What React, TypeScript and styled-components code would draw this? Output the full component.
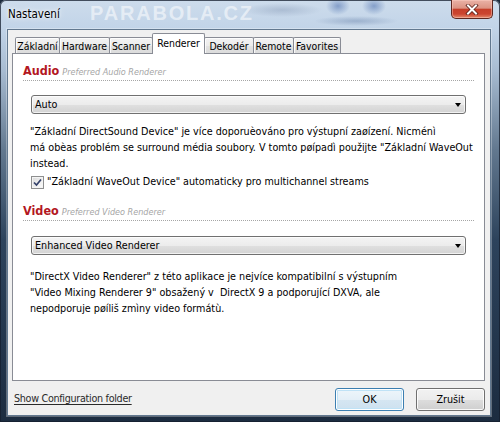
import React from "react";
import styled, { createGlobalStyle } from "styled-components";

const FONT = `"DejaVu Sans Condensed", "DejaVu Sans", Tahoma, sans-serif`;

const Global = createGlobalStyle`
  html, body { margin: 0; padding: 0; background: #1b2a3c; }
  body { width: 500px; height: 422px; overflow: hidden; }
  * { box-sizing: border-box; }
`;

const Frame = styled.div`
  position: relative;
  width: 500px;
  height: 422px;
  display: flex;
  flex-direction: column;
  font-family: ${FONT};
  font-stretch: condensed;
  font-size: 10.7px;
  color: #000;
  border-radius: 6px 6px 0 0;
  overflow: hidden;
  box-shadow: inset 0 0 0 1px rgba(20, 30, 45, 0.75);
  background:
    radial-gradient(ellipse 40px 7px at 282px 10px, rgba(95, 115, 150, 0.28), transparent),
    radial-gradient(ellipse 12px 9px at 338px 6px, rgba(45, 85, 160, 0.45), transparent),
    radial-gradient(ellipse 12px 9px at 374px 6px, rgba(45, 85, 160, 0.45), transparent),
    radial-gradient(ellipse 42px 5px at 356px 21px, rgba(60, 90, 140, 0.3), transparent),
    linear-gradient(to bottom, #cddcec 0px, #c2d4e8 28px, #a8bcd2 70px, #62788f 150px, #2d435c 240px, #1c2c40 100%);
`;

const TitleBar = styled.div`
  position: relative;
  height: 30px;
  flex: none;
  display: flex;
  align-items: flex-start;
  padding: 0 7px 0 8px;
`;

const Title = styled.div`
  margin-top: 7px;
  line-height: 14px;
  font-size: 11.5px;
  color: #000;
  text-shadow: 0 0 6px rgba(255, 255, 255, 0.95), 0 0 3px rgba(255, 255, 255, 0.9);
`;

const Watermark = styled.div`
  position: absolute;
  left: 90px;
  top: 3px;
  font-family: "Liberation Sans", Arial, sans-serif;
  font-weight: bold;
  font-size: 20px;
  line-height: 20px;
  letter-spacing: 1.8px;
  color: rgba(255, 255, 255, 0.55);
  pointer-events: none;
`;

const CloseButton = styled.div`
  margin-left: auto;
  width: 42px;
  height: 19px;
  display: flex;
  align-items: center;
  justify-content: center;
  border: 1px solid #5e2720;
  border-top: none;
  border-radius: 0 0 5px 5px;
  background: linear-gradient(to bottom, #eab2a6 0%, #dc9383 45%, #c63f2a 52%, #cc4530 78%, #e48a6c 100%);
  box-shadow: inset 0 0 0 1px rgba(255, 210, 200, 0.45);
`;

const Client = styled.div`
  flex: 1;
  margin: 0 10px 7px 8px;
  background: #f0f0f0;
  display: flex;
  flex-direction: column;
  box-shadow: 0 0 0 1px #62788f, 0 0 0 2px rgba(255, 255, 255, 0.3);
`;

const TabStrip = styled.div`
  display: flex;
  align-items: flex-end;
  height: 20px;
  margin: 3px 0 0 7px;
  position: relative;
  z-index: 1;
`;

const Tab = styled.div<{ $w: number; $active?: boolean }>`
  width: ${(p) => p.$w}px;
  height: ${(p) => (p.$active ? 21 : 16)}px;
  margin-right: -1px;
  margin-bottom: ${(p) => (p.$active ? -1 : 0)}px;
  border: 1px solid #898c95;
  border-bottom: none;
  border-radius: 2px 2px 0 0;
  position: relative;
  z-index: ${(p) => (p.$active ? 2 : 1)};
  text-align: center;
  white-space: nowrap;
  font-size: 10.4px;
  line-height: 14px;
  padding-top: ${(p) => (p.$active ? 2 : 1)}px;
  background: ${(p) =>
    p.$active
      ? "#ffffff"
      : "linear-gradient(to bottom, #f3f3f3 0%, #ececec 50%, #e2e2e2 51%, #dcdcdc 100%)"};
  box-shadow: ${(p) => (p.$active ? "none" : "inset 1px 1px 0 rgba(255,255,255,0.8)")};
`;

const Panel = styled.div`
  flex: none;
  height: 328px;
  margin: 0 5px 0 4px;
  border: 1px solid #898c95;
  background: #fff;
  display: flex;
  flex-direction: column;
`;

const Heading = styled.div<{ $top: number }>`
  margin: ${(p) => p.$top}px 10px 0 10px;
  height: 19px;
  display: flex;
  align-items: baseline;
  gap: 3px;
  border-bottom: 1px dotted #a6a6a6;
`;

const HeadingTitle = styled.span`
  font-size: 12.5px;
  font-weight: bold;
  line-height: 18px;
  color: #b3171f;
`;

const HeadingSub = styled.span`
  font-size: 9px;
  font-style: italic;
  color: #a5a5a5;
`;

const Combo = styled.div<{ $top: number }>`
  margin: ${(p) => p.$top}px 18px 0 18px;
  height: 19px;
  display: flex;
  align-items: center;
  justify-content: space-between;
  padding: 0 4px 0 3px;
  border: 1px solid #707070;
  border-radius: 3px;
  background: linear-gradient(to bottom, #f4f4f4 0%, #ececec 50%, #e0e0e0 51%, #d3d3d3 100%);
  box-shadow: inset 0 0 0 1px rgba(255, 255, 255, 0.7);
  line-height: 14px;
`;

const Arrow = styled.span`
  width: 0;
  height: 0;
  border-left: 3.5px solid transparent;
  border-right: 3.5px solid transparent;
  border-top: 4px solid #000;
`;

const Para = styled.p<{ $top: number }>`
  margin: ${(p) => p.$top}px 18px 0 17px;
  line-height: 16px;
  white-space: nowrap;
`;

const CheckRow = styled.div`
  margin: 2px 18px 0 18px;
  height: 16px;
  display: flex;
  align-items: center;
  gap: 3px;
  line-height: 16px;
`;

const CheckBox = styled.span`
  width: 13px;
  height: 13px;
  flex: none;
  display: flex;
  align-items: center;
  justify-content: center;
  border: 1px solid #8e8f8f;
  background: linear-gradient(135deg, #d9d9d9 0%, #f0f0f0 60%, #fbfbfb 100%);
  box-shadow: inset 0 0 0 1px #f4f4f4;
`;

const Footer = styled.div`
  flex: 1;
  display: flex;
  align-items: flex-start;
  padding: 7px 5px 0 6px;
`;

const LinkText = styled.span`
  margin-top: 3px;
  line-height: 16px;
  letter-spacing: -0.3px;
  color: #2a2a2a;
  text-decoration: underline;
  text-underline-offset: 2px;
`;

const Buttons = styled.div`
  margin-left: auto;
  display: flex;
  gap: 12px;
`;

const Button = styled.div<{ $default?: boolean }>`
  width: 69px;
  height: 23px;
  display: flex;
  align-items: center;
  justify-content: center;
  border-radius: 3px;
  border: 1px solid ${(p) => (p.$default ? "#3c7fb1" : "#707070")};
  background: ${(p) =>
    p.$default
      ? "linear-gradient(to bottom, #eef6fb 0%, #e4eff7 50%, #d5e6f2 51%, #cde1ef 100%)"
      : "linear-gradient(to bottom, #f2f2f2 0%, #ebebeb 50%, #dddddd 51%, #cfcfcf 100%)"};
  box-shadow: ${(p) =>
    p.$default
      ? "inset 0 0 0 1px #ffffff, inset 0 0 0 2px #bfe2f6"
      : "inset 0 0 0 1px rgba(255,255,255,0.85)"};
`;

const tabs: { label: string; w: number; active?: boolean }[] = [
  { label: "Základní", w: 45 },
  { label: "Hardware", w: 51 },
  { label: "Scanner", w: 44 },
  { label: "Renderer", w: 53, active: true },
  { label: "Dekodér", w: 50 },
  { label: "Remote", w: 41 },
  { label: "Favorites", w: 48 },
];

const CloseIcon = () => (
  <svg width="14" height="11" viewBox="0 0 14 11">
    <path d="M3 1.5 L11 9.5 M11 1.5 L3 9.5" stroke="#5a1f18" strokeWidth="3.6" strokeLinecap="square" fill="none" />
    <path d="M3 1.5 L11 9.5 M11 1.5 L3 9.5" stroke="#ffffff" strokeWidth="2" strokeLinecap="square" fill="none" />
  </svg>
);

const CheckIcon = () => (
  <svg width="9" height="9" viewBox="0 0 9 9">
    <path d="M1 4.5 L3.5 7 L8 1.5" stroke="#34416a" strokeWidth="1.7" fill="none" />
  </svg>
);

export default function App() {
  return (
    <>
      <Global />
      <Frame>
        <TitleBar>
          <Title>Nastavení</Title>
          <Watermark>PARABOLA.CZ</Watermark>
          <CloseButton>
            <CloseIcon />
          </CloseButton>
        </TitleBar>
        <Client>
          <TabStrip>
            {tabs.map((t) => (
              <Tab key={t.label} $w={t.w} $active={t.active}>
                {t.label}
              </Tab>
            ))}
          </TabStrip>
          <Panel>
            <Heading $top={8}>
              <HeadingTitle>Audio</HeadingTitle>
              <HeadingSub>Preferred Audio Renderer</HeadingSub>
            </Heading>
            <Combo $top={14}>
              <span>Auto</span>
              <Arrow />
            </Combo>
            <Para $top={10}>
              "Základní DirectSound Device" je více doporuèováno pro výstupní zaøízení. Nicménì
              <br />
              má obèas problém se surround média soubory. V tomto pøípadì použijte "Základní WaveOut
              <br />
              instead.
            </Para>
            <CheckRow>
              <CheckBox>
                <CheckIcon />
              </CheckBox>
              <span>"Základní WaveOut Device" automaticky pro multichannel streams</span>
            </CheckRow>
            <Heading $top={12}>
              <HeadingTitle>Video</HeadingTitle>
              <HeadingSub>Preferred Video Renderer</HeadingSub>
            </Heading>
            <Combo $top={15}>
              <span>Enhanced Video Renderer</span>
              <Arrow />
            </Combo>
            <Para $top={14}>
              "DirectX Video Renderer" z této aplikace je nejvíce kompatibilní s výstupním
              <br />
              "Video Mixing Renderer 9" obsažený v&nbsp; DirectX 9 a podporující DXVA, ale
              <br />
              nepodporuje pøíliš zmìny video formátù.
            </Para>
          </Panel>
          <Footer>
            <LinkText>Show Configuration folder</LinkText>
            <Buttons>
              <Button $default>OK</Button>
              <Button>Zrušit</Button>
            </Buttons>
          </Footer>
        </Client>
      </Frame>
    </>
  );
}
